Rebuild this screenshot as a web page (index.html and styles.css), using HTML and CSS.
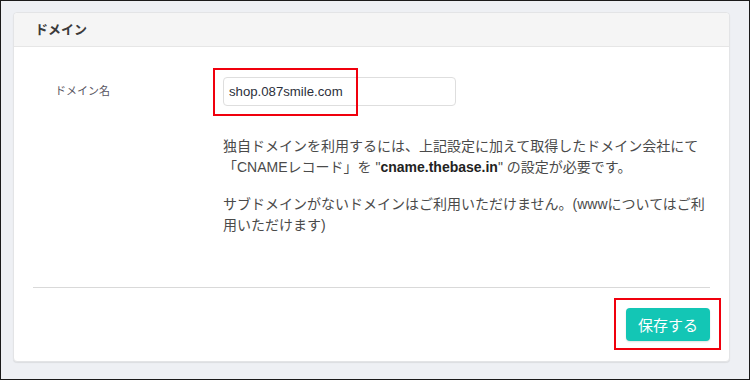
FILE: index.html
```html
<!DOCTYPE html>
<html lang="ja">
<head>
<meta charset="utf-8">
<link rel="stylesheet" href="styles.css">
</head>
<body>
<div class="frame">
  <section class="card">
    <header class="card-head">ドメイン</header>
    <div class="card-body">
      <div class="form-row">
        <label class="label">ドメイン名</label>
        <div class="field">
          <div class="input-wrap mark">
            <input class="input" type="text" value="shop.087smile.com">
          </div>
          <p class="note">独自ドメインを利用するには、上記設定に加えて取得したドメイン会社にて<br>「CNAMEレコード」を "<b>cname.thebase.in</b>" の設定が必要です。</p>
          <p class="note">サブドメインがないドメインはご利用いただけません。(wwwについてはご利<br>用いただけます)</p>
        </div>
      </div>
    </div>
    <div class="card-foot">
      <div class="btn-wrap mark-btn">
        <button class="btn" type="button">保存する</button>
      </div>
    </div>
  </section>
</div>
</body>
</html>
```

FILE: styles.css
```css
html, body {
  margin: 0;
  padding: 0;
}
body {
  font-family: "Liberation Sans", "Noto Sans CJK JP", sans-serif;
  color: #444;
}
.frame {
  box-sizing: border-box;
  width: 750px;
  height: 380px;
  border: 1px solid #1a1a1a;
  background: #eef0f4;
  padding: 11px 0 0 12px;
}
.card {
  box-sizing: border-box;
  width: 717px;
  height: 350px;
  background: #fff;
  border: 1px solid #e3e4e6;
  border-radius: 4px;
  box-shadow: 0 1px 1px rgba(0,0,0,0.08);
  display: flex;
  flex-direction: column;
}
.card-head {
  height: 33px;
  background: #f5f5f5;
  border-bottom: 1px solid #e6e6e6;
  border-radius: 4px 4px 0 0;
  padding-left: 21px;
  font-size: 13px;
  font-weight: bold;
  color: #3a3a3a;
  line-height: 33px;
}
.card-body {
  padding: 30px 19px 0 19px;
}
.form-row {
  display: grid;
  grid-template-columns: 190px 1fr;
}
.label {
  padding-left: 22px;
  font-size: 11px;
  color: #58555f;
  line-height: 29px;
}
.input-wrap {
  position: relative;
  width: 233px;
}
.input {
  box-sizing: border-box;
  display: block;
  width: 233px;
  height: 29px;
  border: 1px solid #dedede;
  border-radius: 4px;
  padding: 0 5px;
  font-family: "Liberation Sans", sans-serif;
  font-size: 13.2px;
  color: #2b2f3a;
  background: #fff;
  outline: none;
}
.mark::after {
  content: "";
  position: absolute;
  left: -10px;
  top: -9px;
  width: 145px;
  height: 48px;
  box-sizing: border-box;
  border: 2px solid #f0000d;
}
.note {
  margin: 0;
  font-size: 14px;
  line-height: 21px;
  color: #4a4a4a;
}
.input-wrap + .note {
  margin-top: 30px;
}
.note + .note {
  margin-top: 16px;
}
.note b {
  color: #222;
}
.card-foot {
  margin: 51px 19px 0 19px;
  border-top: 1px solid #d9d9d9;
  padding-top: 20px;
  display: flex;
  justify-content: flex-end;
}
.btn-wrap {
  position: relative;
}
.btn {
  display: block;
  height: 33px;
  width: 84px;
  border: none;
  border-radius: 4px;
  background: #13c6b5;
  color: #fff;
  font-family: "Noto Sans CJK JP", sans-serif;
  font-size: 15px;
  padding: 0;
  box-shadow: 0 1px 2px rgba(0,0,0,0.12);
}
.mark-btn::after {
  content: "";
  position: absolute;
  left: -12px;
  top: -10px;
  width: 107px;
  height: 52px;
  box-sizing: border-box;
  border: 2px solid #f0000d;
}
```
